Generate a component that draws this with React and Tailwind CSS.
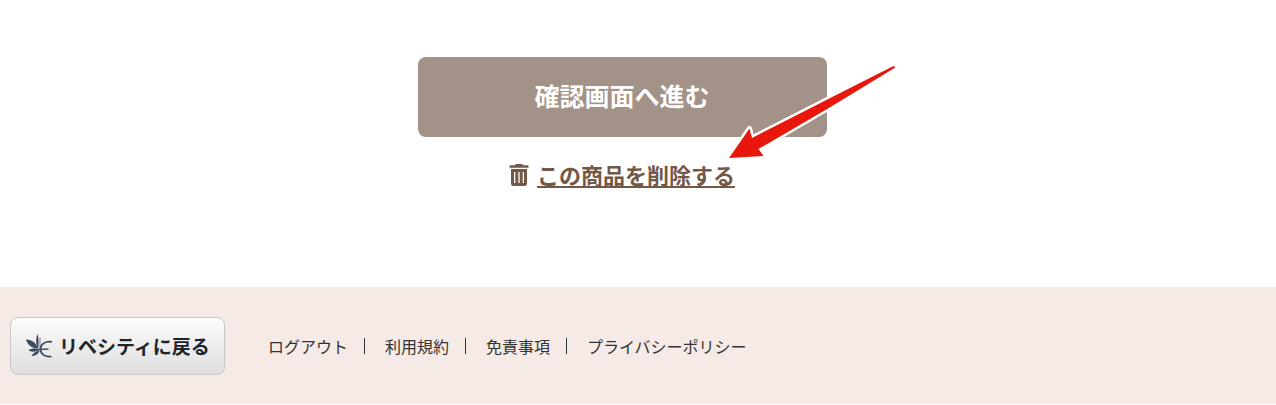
import React from 'react';

const footerLinks = ['ログアウト', '利用規約', '免責事項', 'プライバシーポリシー'];

function TrashIcon() {
  return (
    <svg className="w-5 h-6 shrink-0" viewBox="0 0 20 24" fill="currentColor" aria-hidden="true">
      <path d="M6 2.2Q6.200 1 7.400 1H12.600Q13.800 1 14 2.200H18.800Q19.500 2.200 19.500 3V4.200Q19.500 4.800 18.800 4.800H1.200Q.5 4.800 .5 4.200V3Q.5 2.200 1.200 2.200Z" />
      <path
        fillRule="evenodd"
        d="M2 6H18V20.500Q18 23 15.500 23H4.500Q2 23 2 20.500ZM5 9V20H6.300V9ZM9.350 9V20H10.650V9ZM13.700 9V20H15V9Z"
      />
    </svg>
  );
}

function WingLogo() {
  return (
    <svg className="w-7 h-6 shrink-0" viewBox="0 0 28 24" fill="#3b4a63" aria-hidden="true">
      <path d="M1 5.500C6 5.500 11.500 8.500 12.500 14.500C7 14 2.500 11.500 1 5.500Z" />
      <path d="M12.300 0C13.800 3 14 10 13 15.500C11 11 10.500 5 12.300 0Z" />
      <path d="M3.500 16.500C6 14 11 14 15 15.500C11 18 6.500 18.300 3.500 16.500Z" />
      <path d="M6.500 22C8.500 18.800 11 17 14.800 16C14 19.500 11 22 6.500 22Z" />
      <path d="M15 3.500V14" fill="none" stroke="#8d96a5" strokeWidth="1.200" />
      <path
        d="M27 7.800C20.500 6.800 15.600 10 15.500 15C15.500 20.500 20.500 23.300 26.500 22.500"
        fill="none"
        stroke="#3b4a63"
        strokeWidth="1.700"
      />
      <path d="M14 15.200H23.500" fill="none" stroke="#3b4a63" strokeWidth="1.400" />
    </svg>
  );
}

// Red pointer lying over the submit button
function Arrow() {
  return (
    <svg
      className="absolute left-[304px] top-0 w-[180px] h-[110px] pointer-events-none"
      viewBox="0 0 180 110"
      aria-hidden="true"
    >
      <path
        d="M7 101L27.500 71.500L30 81Q100 45 170.500 9.500Q174 8.500 172.500 11Q105 53 36.500 92L41.500 99Z"
        fill="#e8170b"
        stroke="#fff"
        strokeWidth="5"
        strokeLinejoin="round"
        paintOrder="stroke"
      />
    </svg>
  );
}

function App() {
  return (
    <div className="bg-white font-['Noto_Sans_CJK_JP',sans-serif]">
      <main className="flex flex-col items-center pl-4 pr-12 pt-[57px] pb-24">
        <div className="relative w-full max-w-[409px]">
          <button
            type="button"
            className="w-full h-20 rounded-lg bg-[#a39287] pb-0.5 text-white text-[25px] font-bold"
          >
            確認画面へ進む
          </button>
          <Arrow />
        </div>
        <a href="#" className="mt-[22px] flex items-center gap-2 text-[#735847] font-bold">
          <TrashIcon />
          <span className="pb-0.5 text-[22px] leading-[30px] underline decoration-2 underline-offset-2">
            この商品を削除する
          </span>
        </a>
      </main>
      <footer className="flex items-center gap-[43px] bg-[#f5eae5] px-[10px] pt-[30px] pb-[29px]">
        <a
          href="#"
          className="flex items-center gap-1.5 rounded-lg border border-[#c8c8c8] bg-linear-to-b from-[#fcfcfc] to-[#dedede] px-[14px] py-[14px] text-[#1f242b] text-[19px] leading-7 font-bold"
        >
          <WingLogo />
          リベシティに戻る
        </a>
        <ul className="flex items-center text-base text-[#333]">
          {footerLinks.map((label, index) => (
            <li key={label} className="flex items-center">
              {index > 0 && <span className="ml-4 mr-5 h-4 w-px bg-[#333]" />}
              <a href="#">{label}</a>
            </li>
          ))}
        </ul>
      </footer>
    </div>
  );
}

export default App;
